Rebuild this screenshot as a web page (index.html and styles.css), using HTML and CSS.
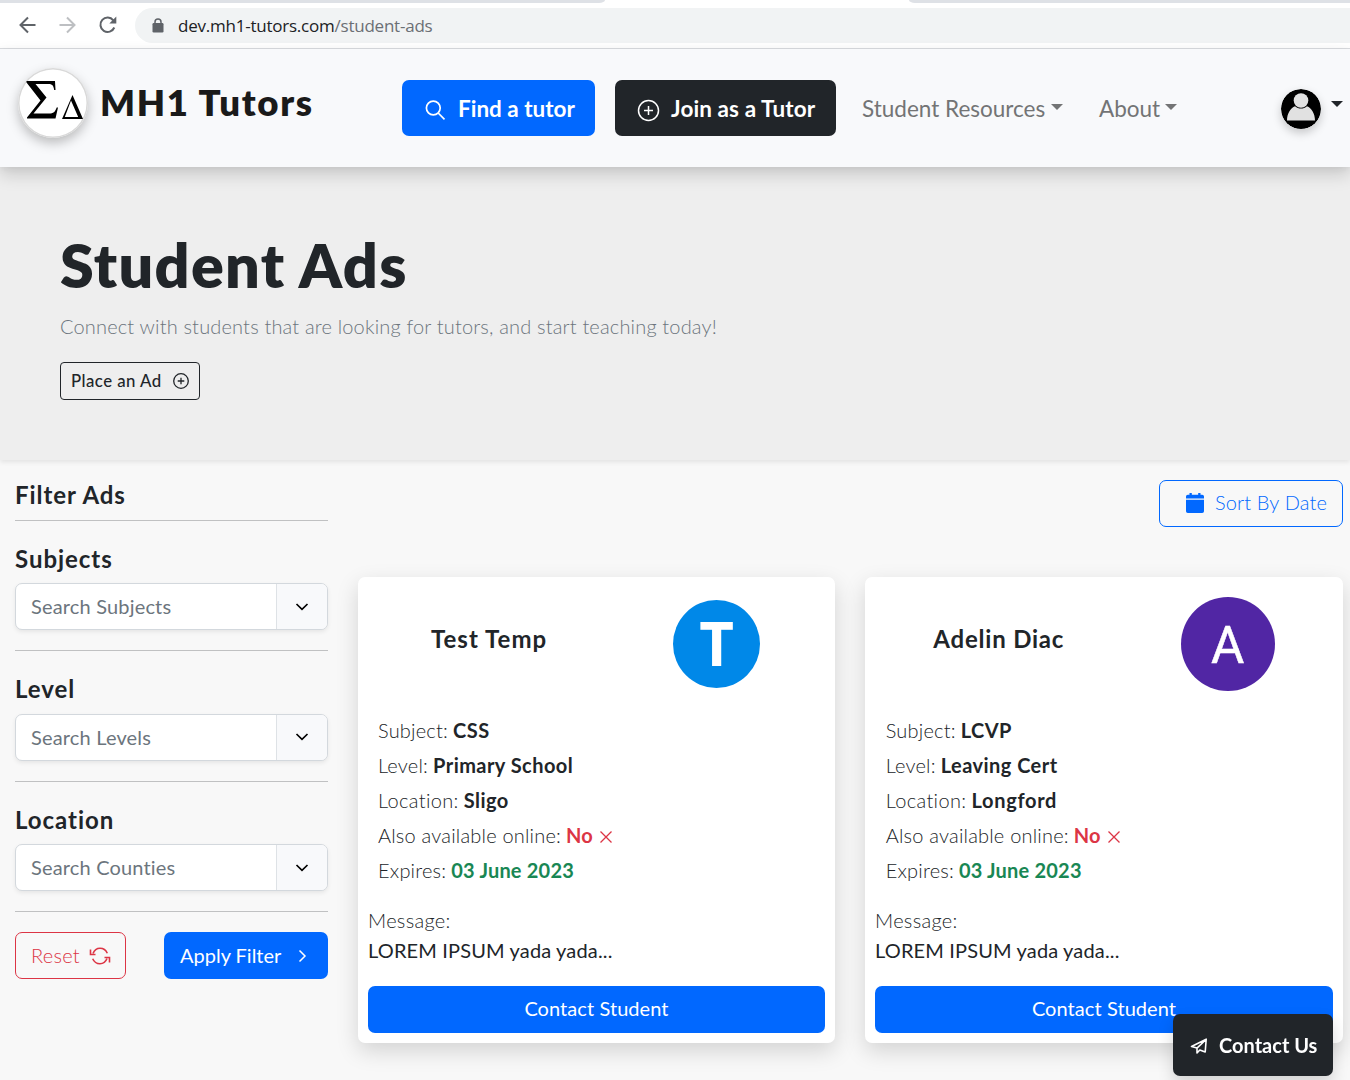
FILE: index.html
```html
<!DOCTYPE html>
<html lang="en">
<head>
<meta charset="utf-8">
<title>Student Ads - MH1 Tutors</title>
<link rel="stylesheet" href="styles.css">
</head>
<body>
<div class="browser">
  <div class="tabstrip"><i class="tab-rest tab-left"></i><i class="tab-rest tab-right"></i></div>
  <div class="toolbar">
    <svg class="tool" width="20" height="20" viewBox="0 0 20 20" fill="none" stroke="#5f6368" stroke-width="2"><path d="M18.500 10H3.500M11 2.500 3.500 10l7.500 7.500"/></svg>
    <svg class="tool" width="20" height="20" viewBox="0 0 20 20" fill="none" stroke="#bdbfc2" stroke-width="2"><path d="M2.500 10h15M10 2.500 17.500 10 10 17.500"/></svg>
    <svg class="tool" width="20" height="20" viewBox="0 0 20 20"><path d="M17.300 12.500A7.200 7.200 0 1 1 16.300 5.300" fill="none" stroke="#5f6368" stroke-width="2"/><path d="M19.300 1.500v7h-7z" fill="#5f6368"/></svg>
    <div class="omnibox">
      <svg width="12" height="15" viewBox="0 0 12 15"><rect x=".5" y="5" width="11" height="9.500" rx="1.200" fill="#5f6368"/><path d="M3 5.500V4a3 3 0 0 1 6 0v1.500" fill="none" stroke="#5f6368" stroke-width="1.500"/></svg>
      <span class="url">dev.mh1-tutors.com<span class="path">/student-ads</span></span>
    </div>
  </div>
</div>

<header class="nav">
  <a class="brand">
    <svg class="logo" width="70" height="70" viewBox="0 0 70 70">
      <path d="M8.500 13H37l.5 9h-1.300c-.7-4.500-2-6-6-6H17.500L28.500 29.500 15.500 45.500H31c4.500 0 6-1.500 7.700-6H40L37.500 50.500H9v-1L22.500 32.500 8.500 14.500z"/>
      <path d="M54.500 27 65 51H44zM53 32.500 46.800 49H60.200z" fill-rule="evenodd"/>
    </svg>
    <span class="brand-name">MH1 Tutors</span>
  </a>
  <a class="nav-btn blue"><svg width="24" height="24" viewBox="0 0 24 24" fill="none" stroke="#fff" stroke-width="1.700"><circle cx="10.300" cy="10" r="6.900"/><path d="m15.200 15 6.300 6.300"/></svg><span>Find a tutor</span></a>
  <a class="nav-btn dark"><svg width="24" height="24" viewBox="0 0 24 24" fill="none" stroke="#fff" stroke-width="1.500"><circle cx="12.500" cy="12.500" r="10"/><path d="M12.500 8v9M8 12.500h9"/></svg><span>Join as a Tutor</span></a>
  <a class="nav-link res"><span>Student Resources</span><i class="caret"></i></a>
  <a class="nav-link about"><span>About</span><i class="caret"></i></a>
  <a class="account">
    <svg class="user" width="40" height="40" viewBox="0 0 40 40"><circle cx="20" cy="20" r="20"/><circle cx="20" cy="11.500" r="7.300" fill="#e1e1e1"/><path d="M6 31.500c0-7 3.500-12.500 8-14.300 3.500 3.200 8.500 3.200 12 0 4.500 1.800 8 7.300 8 14.300z" fill="#e1e1e1"/></svg>
    <i class="caret"></i>
  </a>
</header>

<section class="hero">
  <h1>Student Ads</h1>
  <p class="lead">Connect with students that are looking for tutors, and start teaching today!</p>
  <a class="place"><span>Place an Ad</span><svg width="18" height="18" viewBox="0 0 18 18" fill="none" stroke="#212529" stroke-width="1.300"><circle cx="9" cy="9" r="7.300"/><path d="M9 5.700v6.600M5.700 9h6.600"/></svg></a>
</section>

<main class="page">
  <aside class="filters">
    <h2 class="filters-title">Filter Ads</h2>
    <section class="filter"><h3>Subjects</h3><div class="combo"><span class="field">Search Subjects</span><span class="drop"><svg width="14" height="14" viewBox="0 0 14 14" fill="none" stroke="#000" stroke-width="1.700"><path d="m1.500 4 5.500 5.300L12.500 4"/></svg></span></div></section>
    <section class="filter"><h3>Level</h3><div class="combo"><span class="field">Search Levels</span><span class="drop"><svg width="14" height="14" viewBox="0 0 14 14" fill="none" stroke="#000" stroke-width="1.700"><path d="m1.500 4 5.500 5.300L12.500 4"/></svg></span></div></section>
    <section class="filter"><h3>Location</h3><div class="combo"><span class="field">Search Counties</span><span class="drop"><svg width="14" height="14" viewBox="0 0 14 14" fill="none" stroke="#000" stroke-width="1.700"><path d="m1.500 4 5.500 5.300L12.500 4"/></svg></span></div></section>
    <div class="actions">
      <a class="btn reset"><span>Reset</span><svg width="22" height="20" viewBox="0 0 22 20" fill="none" stroke="#dc3545" stroke-width="1.600"><path d="M4 7.500C5.300 4.200 8 2.300 11 2.300c3.300 0 6 2 7.300 5M18 12.500c-1.300 3.300-4 5.200-7 5.200-3.300 0-6-2-7.300-5"/><path d="M1.500 3.500v5h5M20.500 16.500v-5h-5"/></svg></a>
      <a class="btn apply"><span>Apply Filter</span><svg width="14" height="14" viewBox="0 0 14 14" fill="none" stroke="#fff" stroke-width="1.500"><path d="M4.500 1.500 10 7l-5.500 5.500"/></svg></a>
    </div>
  </aside>

  <div class="results">
    <a class="btn sort"><svg width="20" height="22" viewBox="0 0 20 22" fill="#0168ff"><path d="M1 6.500V4.500A1.800 1.800 0 0 1 2.800 2.700H4.500V1h2.300v1.700h6.400V1h2.300v1.700h1.700A1.800 1.800 0 0 1 19 4.500v2zM1 7.800h18v11.400a1.800 1.800 0 0 1-1.800 1.800H2.800A1.800 1.800 0 0 1 1 19.200z"/></svg><span>Sort By Date</span></a>
    <div class="cards">
      <article class="card">
        <div class="card-head head-test"><h2 class="name-wide">Test Temp</h2><span class="avatar avatar-t">T</span></div>
        <ul class="facts">
          <li><span>Subject:</span> <b>CSS</b></li>
          <li><span>Level:</span> <b>Primary School</b></li>
          <li><span class="key-wide">Location:</span> <b>Sligo</b></li>
          <li><span>Also available online:</span> <b class="no">No</b><svg width="14" height="14" viewBox="0 0 14 14" stroke="#dc3545" stroke-width="1.300"><path d="m1.500 1.500 11 11m0-11-11 11"/></svg></li>
          <li><span>Expires:</span> <b class="date">03 June 2023</b></li>
        </ul>
        <p class="message">Message:<br><span class="body">LOREM IPSUM yada yada...</span></p>
        <a class="btn contact"><span>Contact Student</span></a>
      </article>
      <article class="card">
        <div class="card-head"><h2>Adelin Diac</h2><span class="avatar avatar-a">A</span></div>
        <ul class="facts facts-second">
          <li><span>Subject:</span> <b>LCVP</b></li>
          <li><span>Level:</span> <b>Leaving Cert</b></li>
          <li><span class="key-wide">Location:</span> <b class="value-wide">Longford</b></li>
          <li><span>Also available online:</span> <b class="no">No</b><svg width="14" height="14" viewBox="0 0 14 14" stroke="#dc3545" stroke-width="1.300"><path d="m1.500 1.500 11 11m0-11-11 11"/></svg></li>
          <li><span>Expires:</span> <b class="date">03 June 2023</b></li>
        </ul>
        <p class="message">Message:<br><span class="body">LOREM IPSUM yada yada...</span></p>
        <a class="btn contact"><span>Contact Student</span></a>
      </article>
    </div>
  </div>
</main>

<a class="contact-us"><svg width="19" height="19" viewBox="0 0 19 19" fill="none" stroke="#fff" stroke-width="1.600" stroke-linejoin="round"><path d="M17.200 3.200 16.200 16l-5.400-2L8 17v-4.800L16.500 4 8 12 2.500 10.500z"/></svg><span>Contact Us</span></a>
</body>
</html>
```
FILE: styles.css
```css
* { box-sizing: border-box; }
body { margin: 0; width: 1350px; height: 1080px; overflow: hidden; background: #f8f8f8; color: #212529; font: 400 20px/30px Lato, "Liberation Sans", sans-serif; font-variant-ligatures: none; }
h1, h2, h3, p, ul { margin: 0; padding: 0; }
svg { flex: none; display: block; }

.browser { height: 49px; background: #fff; border-bottom: 1px solid #dadce0; }
.tabstrip { height: 3px; display: flex; justify-content: space-between; }
.tab-rest { background: #dee1e6; height: 3px; }
.tab-left { width: 605px; border-bottom-right-radius: 6px 3px; }
.tab-right { width: 441px; border-bottom-left-radius: 6px 3px; }
.toolbar { display: flex; align-items: center; gap: 20px; padding: 5px 0 0 17px; }
.tool { margin-top: -2px; }
.omnibox { flex: 1; margin-left: -2px; height: 35px; border-radius: 18px 0 0 18px; background: #f1f3f4; display: flex; align-items: center; gap: 14px; padding-left: 17px; }
.url { font: 400 17px/24px "Open Sans", sans-serif; letter-spacing: -.23px; color: #202124; margin-top: 1px; }
.path { color: #6b6f74; }

.nav { position: relative; height: 118px; background: #f8f9fb; box-shadow: 0 8px 16px rgba(0, 0, 0, .15), 0 2px 8px rgba(0, 0, 0, .05); display: flex; align-items: flex-start; padding: 31px 7px 0 18px; }
.brand { display: flex; margin-top: -12px; width: 384px; gap: 12px; }
.logo { border-radius: 50%; background: #fff; box-shadow: inset 0 0 0 1.500px #d9d9d9, 0 5px 12px rgba(0, 0, 0, .25); }
.brand-name { font-weight: 800; font-size: 36.500px; line-height: 69px; letter-spacing: 1.650px; color: #1a1a1a; }
.nav-btn { display: flex; align-items: center; height: 56px; border-radius: 7px; color: #fff; font-weight: 700; font-size: 22.500px; gap: 11px; }
.nav-btn svg { margin-top: 3px; }
.nav-btn span, .nav-link span { padding-top: 2px; }
.blue { width: 193px; padding-left: 21px; background: #0168ff; margin-right: 20px; }
.dark { width: 221px; padding-left: 21px; background: #212529; letter-spacing: .1px; }
.nav-link { display: flex; align-items: center; height: 56px; font-size: 22.500px; color: #737475; gap: 6px; }
.res { width: 237px; padding-left: 26px; }
.about { padding-left: 26px; gap: 5px; }
.caret { border: 6px solid transparent; border-top-color: currentColor; border-bottom: 0; margin-top: -3px; }
.account { display: flex; align-items: center; gap: 10px; margin: 9px 0 0 auto; color: #212529; }
.account .caret { margin-top: -11px; }
.user { border-radius: 50%; box-shadow: 0 4px 10px rgba(0, 0, 0, .2); }

.hero { height: 293px; padding: 60px 60px 0; background: #eee; box-shadow: 0 2px 5px rgba(0, 0, 0, .09); }
h1 { font-weight: 800; font-size: 61px; line-height: 76px; letter-spacing: 1.300px; }
.lead { margin-top: 8px; color: #6c757d; font-weight: 300; letter-spacing: .17px; }
.place { display: flex; align-items: center; gap: 10px; width: 140px; height: 38px; margin-top: 21px; padding-left: 10px; border: 1px solid #212529; border-radius: 4px; font-size: 16.800px; font-weight: 500; letter-spacing: .45px; }

.page { display: flex; gap: 30px; padding: 20px 7px 0 15px; }
.filters { width: 313px; }
.filters-title, h3, .card h2 { font-size: 24px; font-weight: 700; line-height: 29px; letter-spacing: .95px; }
.filters-title { height: 41px; border-bottom: 1px solid #c0c1c2; }
.filter { padding: 23px 0 20px; border-bottom: 1px solid #c0c1c2; }
h3 { line-height: 29.400px; margin-bottom: 10px; }
.combo { display: flex; height: 47px; border: 1px solid #d3d8dd; border-radius: 7px; background: #fff; overflow: hidden; box-shadow: 0 2px 4px rgba(0, 0, 0, .075); }
.field { flex: 1; padding: 7px 15px; color: #6c757d; letter-spacing: .17px; }
.drop { width: 51px; background: #f8f9fb; border-left: 1px solid #dee2e6; display: grid; place-items: center; }
.actions { display: flex; justify-content: space-between; margin-top: 20px; }
.btn { display: flex; align-items: center; height: 47px; border-radius: 7px; }
.btn span { padding-bottom: 2px; }
.reset { width: 111px; padding-left: 15px; gap: 9px; border: 1px solid #dc3545; color: #dc3545; font-weight: 300; letter-spacing: .25px; }
.apply { width: 164px; padding-left: 16px; gap: 14px; background: #0168ff; color: #fff; }

.results { flex: 1; }
.sort { width: 184px; margin: 0 0 50px auto; padding-left: 25px; gap: 10px; border: 1px solid #0168ff; color: #0168ff; font-weight: 300; letter-spacing: .15px; }
.sort svg { margin-top: -1px; }
.sort span, .contact span { padding-bottom: 3px; }
.cards { display: grid; grid-template-columns: 477px 478px; gap: 30px; }
.card { height: 466px; padding: 10px; background: #fff; border-radius: 7px; box-shadow: 0 8px 22px rgba(0, 0, 0, .15); }
.card-head { display: flex; justify-content: space-around; align-items: center; height: 114px; }
.head-test { padding-right: 2px; }
.card h2 { margin-top: -11px; letter-spacing: .8px; }
.card .name-wide { letter-spacing: 1.050px; }
.avatar { border-radius: 50%; color: #fff; text-align: center; }
.avatar-t { width: 87px; height: 88px; background: #0088e8; font: 700 60px/87px "Open Sans", sans-serif; }
.avatar-a { width: 94px; height: 94px; background: #5126a4; font: 400 51px/97px Roboto, sans-serif; -webkit-text-stroke: .5px #fff; }
.facts { list-style: none; padding: 11.500px 10px 0; font-weight: 300; line-height: 35px; letter-spacing: .2px; }
.facts-second { padding-left: 10.700px; }
.facts li { display: flex; align-items: center; height: 35px; gap: 5px; }
.facts b { font-weight: 700; letter-spacing: .45px; }
.facts .key-wide { letter-spacing: .35px; }
.facts .value-wide { letter-spacing: .7px; }
.facts svg { margin: 4px 0 0 1.500px; }
.facts .no { color: #dc3545; letter-spacing: 0; }
.facts .date { color: #198754; letter-spacing: .2px; }
.message { margin: 17px 0 21.500px; font-weight: 300; letter-spacing: .3px; }
.body { font-weight: 400; letter-spacing: .15px; }
.contact { justify-content: center; background: #0168ff; color: #fff; letter-spacing: .07px; }
.contact-us { position: fixed; left: 1173px; top: 1014px; width: 160px; height: 62px; display: flex; align-items: center; gap: 11px; padding-left: 16px; border-radius: 7px; background: #212529; color: #fff; font-weight: 700; box-shadow: 0 8px 16px rgba(0, 0, 0, .15); }
```
